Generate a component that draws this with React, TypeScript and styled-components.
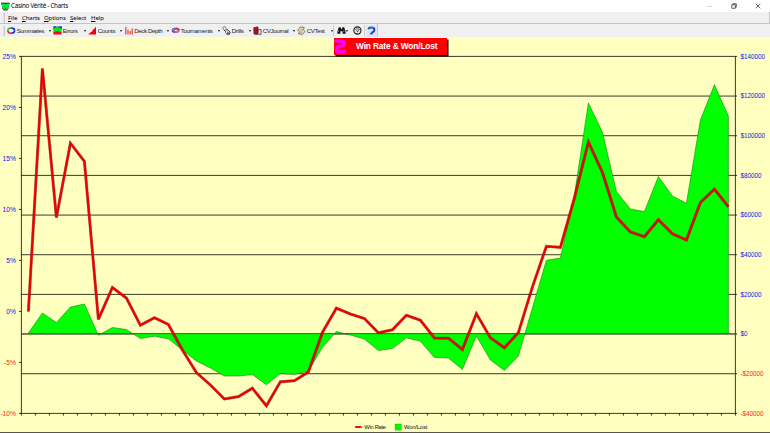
import React from "react";
import styled, { createGlobalStyle } from "styled-components";

const Global = createGlobalStyle`
  * { box-sizing: border-box; }
  html, body { margin: 0; padding: 0; }
  body { width: 770px; height: 433px; overflow: hidden; }
`;

const Window = styled.div`
  display: flex;
  flex-direction: column;
  width: 770px;
  height: 433px;
  background: #ffffc0;
  border-bottom: 1px solid #55554a;
  font-family: "Liberation Sans", Arial, sans-serif;
  overflow: hidden;
`;

const TitleBar = styled.header`
  display: flex;
  align-items: center;
  height: 12px;
  flex: none;
  background: #fff;
  padding: 0 9px 0 1px;
`;

const Title = styled.span`
  flex: 1;
  margin-left: 1px;
  font: 6.2px/12px "Noto Sans", sans-serif;
  letter-spacing: -0.24px;
  color: #000;
  white-space: nowrap;
`;

const WindowButtons = styled.div`
  display: flex;
  align-items: center;
  gap: 18.4px;
`;

const MenuBar = styled.nav`
  display: flex;
  align-items: center;
  height: 12px;
  flex: none;
  background: #f0f0f0;
  border-bottom: 1px solid #c4c4c4;
  padding-left: 3px;
  border-right: 1px solid #c8c8c8;
`;

const Grip = styled.span`
  width: 2px;
  height: 10px;
  background: #e2e2e2;
  border-right: 1px solid #cacaca;
  flex: none;
`;

const MenuItem = styled.span<{ $w: number }>`
  width: ${(p) => p.$w}px;
  font: 6px/12px "Noto Sans", sans-serif;
  letter-spacing: -0.08px;
  color: #000;
  white-space: nowrap;
`;

const MenuList = styled.div`
  display: flex;
  margin-left: 3px;
`;

const Toolbar = styled.div`
  display: flex;
  align-items: center;
  height: 13px;
  flex: none;
  background: #f0f0f0;
  padding-left: 3px;
`;

const Tools = styled.div`
  display: flex;
  align-items: center;
  height: 13px;
  margin-left: 2px;
  border-right: 1px solid #c8c8c8;
`;

const Tool = styled.div<{ $w: number }>`
  display: flex;
  align-items: center;
  width: ${(p) => p.$w}px;
  height: 13px;
  flex: none;
`;

const ToolLabel = styled.span<{ $ls: number }>`
  flex: 1;
  width: 0;
  margin-left: 0.7px;
  font-size: 6.2px;
  line-height: 12px;
  letter-spacing: ${(p) => p.$ls}px;
  color: #1c1c1c;
  white-space: nowrap;
`;

const Arrow = styled.i<{ $gap: number }>`
  width: 0;
  height: 0;
  margin-right: ${(p) => p.$gap}px;
  border: 1.6px solid transparent;
  border-top: 2px solid #111;
  border-bottom: 0;
  flex: none;
`;

const Divider = styled.i`
  width: 1px;
  height: 11px;
  margin-right: 3px;
  background: #cecece;
`;

const HelpButton = styled.span`
  display: flex;
  align-items: center;
  justify-content: center;
  width: 11px;
  height: 12px;
  margin-left: -2px;
  background: #dce7f3;
`;

const ChartArea = styled.main`
  position: relative;
  height: 395px;
`;

const Caption = styled.div`
  position: absolute;
  left: 334px;
  top: 1px;
  width: 113px;
  height: 17px;
  display: flex;
  align-items: center;
  background: #f00;
  box-shadow: 1.5px 1.5px 0 #000;
`;

const CaptionText = styled.span`
  margin-left: 9px;
  font-size: 8.35px;
  line-height: 15px;
  letter-spacing: -0.14px;
  font-weight: 700;
  color: #fff;
  white-space: nowrap;
`;

const Plot = styled.svg`
  display: block;
`;

const IconSvg = styled.svg`
  display: block;
  flex: none;
`;

const Icon = ({ children }: { children: React.ReactNode }) => (
  <IconSvg width="9" height="9" viewBox="0 0 9 9">
    {children}
  </IconSvg>
);

const RingIcon = () => (
  <Icon>
    <g fill="none" strokeWidth="1.5">
      <path d="M.8 4.5C.8 2.8 2.3 2 4.2 2" stroke="#18c830" />
      <path d="M4.2 2C6.2 2 7.6 2.8 7.6 4.5" stroke="#0818e8" />
      <path d="M7.6 4.5C7.6 6.4 6.2 7.2 4.2 7.2" stroke="#0818d0" />
      <path d="M4.2 7.2C2.3 7.2.8 6.4.8 4.5" stroke="#e01818" />
    </g>
  </Icon>
);

const ErrorsIcon = () => (
  <Icon>
    <path fill="#1414c8" d="M.4.6h8.2v3H.4z" />
    <path fill="#00e820" d="M.4 1.2 4 1l4.6 1v4H.4z" />
    <path fill="#f01010" d="M.4 6 4 5.2 8.6 6v2.5H.4z" />
    <path fill="#2018a0" d="M.4.6h3L1.5 2zM6 .6h2.6v2z" />
  </Icon>
);

const CountsIcon = () => (
  <Icon>
    <path fill="#f00000" d="M.2 8.4 3 6l1-.2L5 3.6 6.2 3 8 .5v8z" />
  </Icon>
);

const BarsIcon = () => (
  <Icon>
    <path stroke="#e82828" strokeWidth="1.1" d="M.8 1v7.5M3 3.5v5M5.2 5v3.5M7.2 2.5v6" />
  </Icon>
);

const PalettesIcon = () => (
  <Icon>
    <ellipse cx="4.7" cy="4.3" rx="4.1" ry="2.8" fill="#a860b8" />
    <path fill="#e03858" d="M5 1.6c2 0 3.6 1 3.5 2.4H5z" />
    <path fill="#28b070" d="M1 3.6 4 1.8v2.4z" />
    <path fill="#fff" d="m3.4 4.4 1.6-1 1.4.8L5 5.2z" />
    <path stroke="#2828b0" strokeWidth=".8" fill="none" d="m1 5.2 2 1.2M4 2.6l1 1" />
    <path fill="#e8b020" d="M5.5 5.8 7.6 5 6.6 6.8z" />
  </Icon>
);

const DrillsIcon = () => (
  <Icon>
    <path fill="#fff" stroke="#804848" strokeWidth=".7" d="M.7 1.2 3.4.8l1 2.8-2.4.8z" />
    <path fill="#fff" stroke="#222" strokeWidth=".8" d="M4 4.2 6 3.8l2.2 2.6-.8 1.9H4.8L3.5 6.4" />
    <path stroke="#222" strokeWidth=".8" d="m2 4 2 2M5.5 5.6l.3 2.4M7 5.6v2.6" />
  </Icon>
);

const JournalIcon = () => (
  <Icon>
    <path fill="#b01028" stroke="#500818" strokeWidth=".6" d="M.7 1.7 5 .8v6.6L1 8.2z" />
    <path fill="#e8e8e8" stroke="#222" strokeWidth=".7" d="M5 3.6h3.1v4.7H2.6L5 7.4z" />
    <path stroke="#a01020" strokeWidth=".8" d="M4.9 4.4v3.2" />
  </Icon>
);

const TestIcon = () => (
  <Icon>
    <path
      fill="#f3efc8"
      stroke="#55553a"
      strokeWidth=".8"
      d="M3.4.9 7.3 1.5l-.9 2 1.4 2.2-2.2 2.6-4-.4.8-2.1L.8 4.2z"
    />
    <path stroke="#77774c" strokeWidth=".6" d="m3 3 3 .7M2.8 4.7 6 5.2M3.2 6.4l2.1.4" />
  </Icon>
);

const BinocularsIcon = () => (
  <Icon>
    <path fill="#111" d="M1.8 1.2h1.8l.6 2h.6l.6-2h1.8L8.6 5.8v2H5.6V5.2H3.4v2.6H.3v-2z" />
    <path stroke="#eee" strokeWidth=".5" d="M1.7 4.4 1.2 6M6.7 4.4l.3 1.6" />
  </Icon>
);

const GaugeIcon = () => (
  <Icon>
    <circle cx="4.4" cy="4.5" r="3.6" fill="#eee" stroke="#151515" strokeWidth="1.1" />
    <path fill="none" stroke="#333" strokeWidth=".7" d="M2.3 3.8C3 2.5 6 2.5 6.7 3.8M4.4 6l2-2.6M2.6 3.4l2 2" />
    <circle cx="4.4" cy="5.5" r=".7" fill="#a33" />
  </Icon>
);

const HelpIcon = () => (
  <Icon>
    <path
      fill="none"
      stroke="#0838c8"
      strokeWidth="1.9"
      d="M1.6 3.2C1.6 1.2 7.4.6 7.4 3.6 7.4 5.4 6.4 6.4 4.6 6.2"
    />
    <path fill="#0838c8" d="M3.2 6.7h2.3v1.7H3.2z" />
    <path fill="none" stroke="#30a8f0" strokeWidth=".7" d="M2 2.5C3 1.4 5 1.3 6 1.8" />
  </Icon>
);

const AppIcon = () => (
  <Icon>
    <path fill="#151c18" d="M.2.8h8.3v1.5L7.6 3v3.6L6.2 8.4H3L1.2 6.6V3L.2 2.4z" />
    <path fill="#00e840" d="M.5 2 3 1.5l1.4.6 1.4-.6 2.5.5-.7 3.7-1.4 2H3L1.2 5.8z" />
    <path fill="#e03020" d="M.4.8h2v.9h-2zM6.5.8h2v.9h-2zM3.8 5.8h1.3V7H3.8z" />
  </Icon>
);

const tools = [
  { label: "Summaries", w: 46, gap: 2.4, ls: -0.45, icon: <RingIcon /> },
  { label: "Errors", w: 35, gap: 2.4, ls: -0.32, icon: <ErrorsIcon /> },
  { label: "Counts", w: 36.5, gap: 2.8, ls: -0.36, icon: <CountsIcon /> },
  { label: "Deck Depth", w: 46.5, gap: 2.3, ls: -0.42, icon: <BarsIcon /> },
  { label: "Tournaments", w: 51, gap: 2.4, ls: -0.35, icon: <PalettesIcon /> },
  { label: "Drills", w: 31, gap: 2.4, ls: -0.3, icon: <DrillsIcon /> },
  { label: "CVJournal", w: 44, gap: 1.8, ls: -0.37, icon: <JournalIcon /> },
  { label: "CVTest", w: 36, gap: 0.5, ls: -0.36, icon: <TestIcon /> },
];

const menus: [string, number][] = [
  ["File", 14],
  ["Charts", 22],
  ["Options", 26],
  ["Select", 21],
  ["Help", 15],
];

const winRate = [
  311.5, 68.5, 217.5, 143.2, 161.3, 319.3, 287.5, 298, 325.3, 317.7, 324.5, 350, 372.5, 385, 399, 396.6, 388.3,
  405.8, 381.8, 380.7, 372, 332.5, 308.2, 314, 318.5, 332.8, 329.8, 315.3, 320.3, 338, 338.2, 349.5, 313.8, 337.8,
  347.8, 332.5, 287, 246.3, 247.3, 198, 142, 172.3, 217, 232, 236.7, 219.7, 233.8, 240, 202.5, 189.1, 206.7,
];

const wonLost = [
  333, 313, 322.5, 307, 304, 335.3, 327.5, 329.5, 338.5, 336.2, 338.8, 350, 361, 368, 376, 376, 374.6, 384.8, 373.5,
  374.5, 371, 347.5, 331.5, 335, 339, 350.6, 348.6, 337.8, 341.3, 357.5, 358, 369.5, 336, 360, 370.4, 356, 308, 260.3,
  258, 195, 103, 132, 191.5, 209, 211.6, 176.5, 196, 203.3, 120, 84.7, 116,
];

const xAt = (i: number) => 28.4 + 14 * i;
const toPoints = (ys: number[]) => ys.map((y, i) => `${xAt(i)},${y}`).join(" ");
const dollars = Array.from({ length: 10 }, (_, k) => 140000 - k * 20000);
const percents = Array.from({ length: 8 }, (_, k) => 25 - k * 5);
const tone = (v: number) => (v < 0 ? "#ff1e10" : "#1010f0");
const gridY = (k: number) => 56.4 + (k * 357) / 9;

const Chart = () => (
  <Plot width="770" height="395" viewBox="0 37 770 395">
    <g stroke="#24241c" strokeWidth=".9">
      {dollars.map((v, k) => (
        <path key={v} d={`M21 ${gridY(k)}H737`} />
      ))}
      <path d="M21.4 56V413.5M735.4 56V413.5" />
      {percents.map((v, k) => (
        <path key={v} d={`M19 ${56.4 + k * 51}h2.4`} />
      ))}
      {Array.from({ length: 52 }, (_, i) => (
        <path key={i} d={`M${21.4 + 14 * i} 413v2.6`} />
      ))}
    </g>
    <polygon points={`28.4,333.6 ${toPoints(wonLost)} 728.4,333.6`} fill="#00ff00" stroke="#108810" strokeWidth=".6" />
    <path d="M21 333.6H737" stroke="#2a7020" strokeWidth=".7" />
    <polyline points={toPoints(winRate)} fill="none" stroke="#500000" strokeOpacity=".5" strokeWidth="3" />
    <polyline points={toPoints(winRate)} fill="none" stroke="#ee0000" strokeWidth="2.2" />
    <g fontSize="6.7">
      {percents.map((v, k) => (
        <text
          key={v}
          x="16"
          y={58.6 + k * 51}
          textAnchor="end"
          fill={tone(v)}
        >
          {v}%
        </text>
      ))}
      {dollars.map((v, k) => {
        const label = `${v < 0 ? "-" : ""}$${Math.abs(v)}`;
        return (
          <text
            key={v}
            x="740.4"
            y={58.6 + (k * 357) / 9}
            fill={tone(v)}
            textLength={v < 0 ? 23.2 : label.length * 3.53}
            lengthAdjust="spacingAndGlyphs"
          >
            {label}
          </text>
        );
      })}
    </g>
    <path d="M355.2 427h6.4" stroke="#f01010" strokeWidth="2" />
    <rect x="395" y="424" width="6.4" height="6.2" fill="#00f800" stroke="#10a010" strokeWidth=".3" />
    <g fontSize="5.8" fill="#111">
      <text x="364.3" y="429" textLength="21.7">
        Win Rate
      </text>
      <text x="404" y="429" textLength="23.3">
        Won/Lost
      </text>
    </g>
  </Plot>
);

export default function App() {
  return (
    <>
      <Global />
      <Window>
        <TitleBar>
          <AppIcon />
          <Title>Casino Vérité - Charts</Title>
          <WindowButtons>
            <IconSvg width="5" height="6" viewBox="0 0 5 6">
              <path d="M0 3.5h4.5" stroke="#aaa" strokeWidth=".5" />
            </IconSvg>
            <IconSvg width="6" height="6" viewBox="0 0 6 6">
              <path fill="none" stroke="#222" strokeWidth=".7" d="M.8 1.8h3.5v3.5H.8zM1.8 1.8V.7h3.5v3.5h-1" />
            </IconSvg>
            <IconSvg width="6" height="6" viewBox="0 0 6 6">
              <path stroke="#222" strokeWidth=".7" d="m.7.7 4.6 4.6M5.3.7.7 5.3" />
            </IconSvg>
          </WindowButtons>
        </TitleBar>
        <MenuBar>
          <Grip />
          <MenuList>
            {menus.map(([name, w]) => (
              <MenuItem key={name} $w={w}>
                <u>{name[0]}</u>
                {name.slice(1)}
              </MenuItem>
            ))}
          </MenuList>
        </MenuBar>
        <Toolbar>
          <Grip />
          <Tools>
            {tools.map((t) => (
              <Tool key={t.label} $w={t.w}>
                {t.icon}
                <ToolLabel $ls={t.ls}>{t.label}</ToolLabel>
                <Arrow $gap={t.gap} />
              </Tool>
            ))}
            <Divider />
            <Tool $w={16}>
              <BinocularsIcon />
              <Arrow $gap={0} />
            </Tool>
            <Tool $w={11}>
              <GaugeIcon />
            </Tool>
            <Divider />
            <HelpButton>
              <HelpIcon />
            </HelpButton>
          </Tools>
        </Toolbar>
        <ChartArea>
          <Chart />
          <Caption>
            <IconSvg width="13" height="17" viewBox="0 0 13 17">
              <path
                fill="none"
                stroke="#ff00ff"
                strokeWidth="3.3"
                d="M.5 3.2H8C8 3.2 10.3 3 10.3 4.8 10.3 8.2 7.5 8.2 5.5 8.2 1.5 8.2 1.8 14 5.5 14 8 14 9.5 13.8 12 12.6"
              />
            </IconSvg>
            <CaptionText>Win Rate &amp; Won/Lost</CaptionText>
          </Caption>
        </ChartArea>
      </Window>
    </>
  );
}
